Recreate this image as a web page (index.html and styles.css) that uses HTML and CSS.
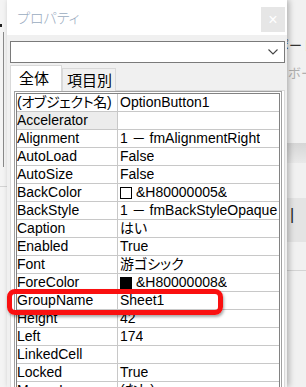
FILE: index.html
```html
<!DOCTYPE html>
<html lang="ja">
<head>
  <meta charset="UTF-8">
  <title>プロパティ</title>
  <link rel="stylesheet" href="styles.css">
</head>
<body>
  <div class="desk">
    <div class="side side-left">
      <div class="left-dot"></div>
      <div class="left-line"></div>
      <div class="left-rule"></div>
    </div>

    <div class="window">
      <div class="titlebar">
        <span class="title">プロパティ</span>
        <span class="close">×</span>
      </div>
      <div class="content">
        <div class="combo">
          <svg width="10" height="6" viewBox="0 0 10 6"><polyline points="0.5,0.5 5,5 9.5,0.5" fill="none" stroke="#444" stroke-width="1.1"/></svg>
        </div>
        <div class="tabs">
          <div class="tab active">全体</div>
          <div class="tab">項目別</div>
        </div>
        <div class="panel">
          <div class="grid">
            <div class="grid-inner">
              <div class="row"><div class="name obj">(オブジェクト名)</div><div class="value">OptionButton1</div></div>
              <div class="row"><div class="name current">Accelerator</div><div class="value"></div></div>
              <div class="row"><div class="name">Alignment</div><div class="value">1 － fmAlignmentRight</div></div>
              <div class="row"><div class="name">AutoLoad</div><div class="value">False</div></div>
              <div class="row"><div class="name">AutoSize</div><div class="value">False</div></div>
              <div class="row"><div class="name">BackColor</div><div class="value"><span class="swatch"></span>&amp;H80000005&amp;</div></div>
              <div class="row"><div class="name">BackStyle</div><div class="value">1 － fmBackStyleOpaque</div></div>
              <div class="row"><div class="name">Caption</div><div class="value">はい</div></div>
              <div class="row"><div class="name">Enabled</div><div class="value">True</div></div>
              <div class="row"><div class="name">Font</div><div class="value">游ゴシック</div></div>
              <div class="row"><div class="name">ForeColor</div><div class="value"><span class="swatch dark"></span>&amp;H80000008&amp;</div></div>
              <div class="row hl"><div class="name">GroupName</div><div class="value">Sheet1</div><span class="hl-box"></span></div>
              <div class="row"><div class="name">Height</div><div class="value">42</div></div>
              <div class="row"><div class="name">Left</div><div class="value">174</div></div>
              <div class="row"><div class="name">LinkedCell</div><div class="value"></div></div>
              <div class="row"><div class="name">Locked</div><div class="value">True</div></div>
              <div class="row"><div class="name">MouseIcon</div><div class="value">(なし)</div></div>
            </div>
          </div>
        </div>
      </div>
    </div>

    <div class="side side-right">
      <div class="bg-text">ポート</div>
      <div class="bg-text light">ボー</div>
      <div class="band"></div>
      <div class="band2"><span class="caret">|</span></div>
      <div class="rule"></div>
    </div>
  </div>
</body>
</html>
```

FILE: styles.css
```css
body {
  margin: 0;
  font-family: "Liberation Sans", "Noto Sans CJK JP", sans-serif;
  background-color: #f2f2f2;
}
.desk {
  display: flex;
  height: 387px;
  overflow: hidden;
}
.side-left {
  width: 7px;
  flex: none;
  background-color: #f4f4f4;
}
.left-dot {
  width: 2px;
  height: 3px;
  margin-top: 24px;
  background-color: #222;
}
.left-line {
  width: 1px;
  height: 135px;
  margin: 5px 0 0 3px;
  background-color: #8a8a8a;
}
.left-rule {
  height: 1px;
  margin-top: 19px;
  background-color: #d4d4d4;
}
.window {
  width: 280px;
  flex: none;
  position: relative;
  z-index: 1;
  background-color: #f0f0f0;
  box-shadow: 2px 0 6px rgba(0, 0, 0, 0.28);
}
.titlebar {
  height: 35px;
  background-color: #fff;
  display: flex;
  align-items: flex-start;
}
.title {
  font-family: "Noto Sans CJK JP", sans-serif;
  font-feature-settings: "palt";
  font-size: 14px;
  font-weight: 300;
  line-height: 18px;
  color: #9aabc0;
  margin: 8px 0 0 10px;
}
.close {
  width: 24px;
  height: 25px;
  margin: 7px 2px 0 auto;
  background-color: #e6e6e6;
  color: #fff;
  text-align: center;
  font-size: 16px;
  line-height: 25px;
}
.content {
  padding: 6px 2px 0 3px;
}
.combo {
  height: 20px;
  border: 1px solid #7a7a7a;
  background-color: #fff;
  display: flex;
  justify-content: flex-end;
  align-items: center;
  padding-right: 6px;
}
.tabs {
  display: flex;
  align-items: flex-end;
  margin-top: 2px;
  margin-bottom: -1px;
  position: relative;
  z-index: 1;
}
.tab {
  font-family: "Noto Sans CJK JP", sans-serif;
  font-size: 15px;
  height: 22px;
  line-height: 22px;
  padding: 0 3px 0 4px;
  border: 1px solid #d9d9d9;
  border-bottom: none;
  background-color: #f0f0f0;
  color: #000;
}
.tab.active {
  height: 25px;
  line-height: 24px;
  padding: 0 12px 0 8px;
  background-color: #fff;
}
.panel {
  height: 320px;
  background-color: #fff;
  border: 1px solid #d9d9d9;
  padding: 0 2px 0 3px;
}
.grid {
  border: 1px solid #a0a0a0;
  padding: 1px;
  background-color: #fff;
}
.grid-inner {
  border: 1px solid #828282;
}
.row {
  display: flex;
  height: 17px;
  line-height: 17px;
  font-size: 14px;
  font-feature-settings: "palt";
  border-bottom: 1px solid #c8c8c8;
  white-space: nowrap;
}
.name {
  width: 100px;
  flex: none;
  overflow: hidden;
  border-right: 1px solid #c8c8c8;
}
.name.obj {
  letter-spacing: -0.3px;
}
.name.current {
  background-color: #ececec;
}
.value {
  display: flex;
  align-items: center;
  padding-left: 2px;
  overflow: hidden;
}
.swatch {
  width: 10px;
  height: 10px;
  border: 1px solid #000;
  background-color: #fff;
  margin-right: 4px;
}
.swatch.dark {
  background-color: #000;
}
.row.hl {
  position: relative;
}
.hl-box {
  position: absolute;
  left: -10px;
  top: -3px;
  width: 216px;
  height: 26px;
  box-sizing: border-box;
  border: 5px solid #fa1010;
  border-radius: 8px;
  box-shadow: 1px 2px 3px rgba(0, 0, 0, 0.35);
}
.side-right {
  flex: 1;
  background-color: #f1f1f1;
  overflow: hidden;
  font-family: "Noto Sans CJK JP", sans-serif;
  font-size: 13px;
}
.bg-text {
  margin: 36px 0 0 -11px;
  line-height: 18px;
  color: #333;
  white-space: nowrap;
}
.bg-text.light {
  margin: 10px 0 0 1px;
  color: #b0b0b0;
}
.band {
  height: 20px;
  margin-top: 61px;
  background: linear-gradient(#d6d6d6, #e9e9e9);
}
.band2 {
  height: 44px;
  margin-top: 35px;
  background-color: #e4e4e4;
  padding-left: 3px;
}
.caret {
  display: block;
  padding-top: 8px;
  font-family: "Liberation Sans", sans-serif;
  font-size: 16px;
  color: #222;
}
.rule {
  height: 1px;
  margin-top: 28px;
  background-color: #d4d4d4;
}
```
